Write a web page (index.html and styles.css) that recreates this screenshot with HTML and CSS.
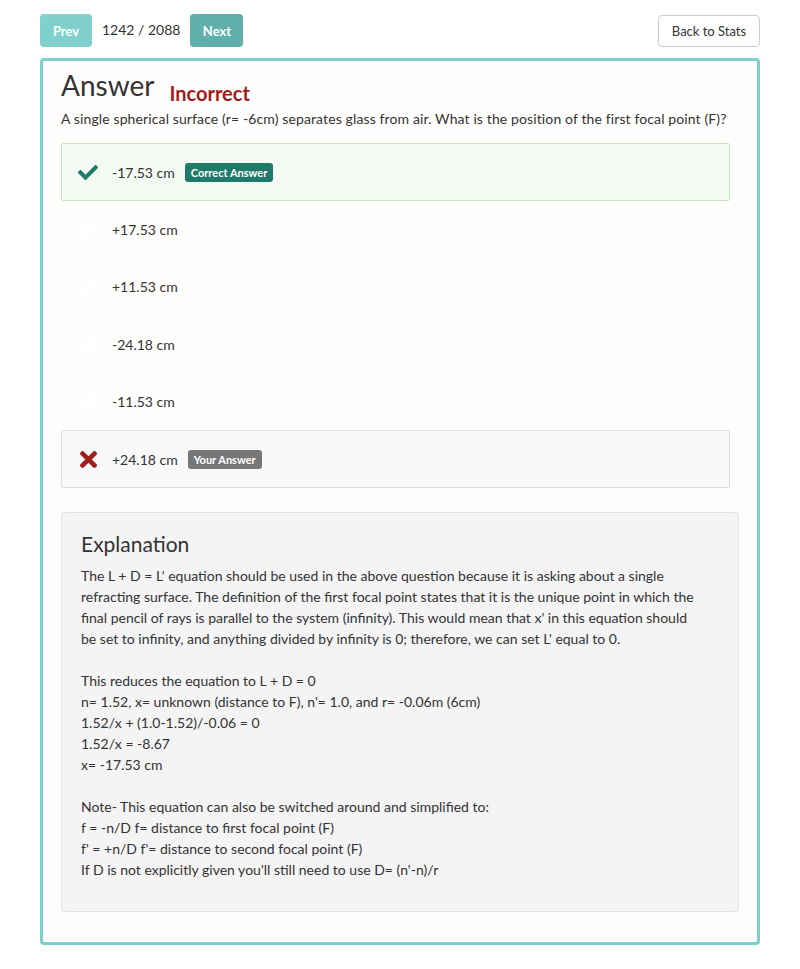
FILE: index.html
```html
<!DOCTYPE html>
<html>
<head>
<meta charset="utf-8">
<link rel="stylesheet" href="styles.css">
</head>
<body>
<div class="page">
  <div class="topbar">
    <div class="nav">
      <button class="btn btn-prev">Prev</button>
      <span class="counter">1242 / 2088</span>
      <button class="btn btn-next">Next</button>
    </div>
    <button class="btn-back">Back to Stats</button>
  </div>

  <div class="card">
    <div class="title">
      <h2>Answer</h2>
      <span class="status">Incorrect</span>
    </div>
    <p class="question">A single spherical surface (r= -6cm) separates glass from air. What is the position of the first focal point (F)?</p>

    <ul class="options">
      <li class="option correct">
        <span class="icon"><svg viewBox="0 64 512 384" width="20" height="15"><path fill="#1f7a6a" d="M173.898 439.404l-166.4-166.4c-9.997-9.997-9.997-26.206 0-36.204l36.203-36.204c9.997-9.998 26.207-9.998 36.204 0L192 312.69 432.095 72.596c9.997-9.997 26.207-9.997 36.204 0l36.203 36.204c9.997 9.997 9.997 26.206 0 36.204l-294.4 294.401c-9.998 9.997-26.207 9.997-36.204-.001z"/></svg></span>
        <span class="label">-17.53 cm</span>
        <span class="badge badge-correct">Correct Answer</span>
      </li>
      <li class="option">
        <span class="icon"><svg viewBox="0 64 512 384" width="20" height="15"><path fill="#ffffff" d="M173.898 439.404l-166.4-166.4c-9.997-9.997-9.997-26.206 0-36.204l36.203-36.204c9.997-9.998 26.207-9.998 36.204 0L192 312.69 432.095 72.596c9.997-9.997 26.207-9.997 36.204 0l36.203 36.204c9.997 9.997 9.997 26.206 0 36.204l-294.4 294.401c-9.998 9.997-26.207 9.997-36.204-.001z"/></svg></span>
        <span class="label">+17.53 cm</span>
      </li>
      <li class="option">
        <span class="icon"><svg viewBox="0 64 512 384" width="20" height="15"><path fill="#ffffff" d="M173.898 439.404l-166.4-166.4c-9.997-9.997-9.997-26.206 0-36.204l36.203-36.204c9.997-9.998 26.207-9.998 36.204 0L192 312.69 432.095 72.596c9.997-9.997 26.207-9.997 36.204 0l36.203 36.204c9.997 9.997 9.997 26.206 0 36.204l-294.4 294.401c-9.998 9.997-26.207 9.997-36.204-.001z"/></svg></span>
        <span class="label">+11.53 cm</span>
      </li>
      <li class="option">
        <span class="icon"><svg viewBox="0 64 512 384" width="20" height="15"><path fill="#ffffff" d="M173.898 439.404l-166.4-166.4c-9.997-9.997-9.997-26.206 0-36.204l36.203-36.204c9.997-9.998 26.207-9.998 36.204 0L192 312.69 432.095 72.596c9.997-9.997 26.207-9.997 36.204 0l36.203 36.204c9.997 9.997 9.997 26.206 0 36.204l-294.4 294.401c-9.998 9.997-26.207 9.997-36.204-.001z"/></svg></span>
        <span class="label">-24.18 cm</span>
      </li>
      <li class="option">
        <span class="icon"><svg viewBox="0 64 512 384" width="20" height="15"><path fill="#ffffff" d="M173.898 439.404l-166.4-166.4c-9.997-9.997-9.997-26.206 0-36.204l36.203-36.204c9.997-9.998 26.207-9.998 36.204 0L192 312.69 432.095 72.596c9.997-9.997 26.207-9.997 36.204 0l36.203 36.204c9.997 9.997 9.997 26.206 0 36.204l-294.4 294.401c-9.998 9.997-26.207 9.997-36.204-.001z"/></svg></span>
        <span class="label">-11.53 cm</span>
      </li>
      <li class="option wrong">
        <span class="icon"><svg viewBox="0 80 352 352" width="17" height="17"><path fill="#a11c1c" d="M242.72 256l100.07-100.07c12.28-12.28 12.28-32.19 0-44.48l-22.24-22.24c-12.28-12.28-32.19-12.28-44.48 0L176 189.28 75.93 89.21c-12.28-12.28-32.19-12.28-44.48 0L9.21 111.45c-12.28 12.28-12.28 32.19 0 44.48L109.28 256 9.21 356.07c-12.28 12.28-12.28 32.19 0 44.48l22.24 22.24c12.28 12.28 32.2 12.28 44.48 0L176 322.72l100.07 100.070c12.28 12.28 32.2 12.28 44.48 0l22.24-22.24c12.28-12.28 12.28-32.19 0-44.48L242.72 256z"/></svg></span>
        <span class="label">+24.18 cm</span>
        <span class="badge badge-yours">Your Answer</span>
      </li>
    </ul>

    <div class="explanation">
      <h3>Explanation</h3>
      <p>The L + D = L' equation should be used in the above question because it is asking about a single refracting surface. The definition of the first focal point states that it is the unique point in which the final pencil of rays is parallel to the system (infinity). This would mean that x' in this equation should be set to infinity, and anything divided by infinity is 0; therefore, we can set L' equal to 0.</p>
      <p>This reduces the equation to L + D = 0<br>n= 1.52, x= unknown (distance to F), n'= 1.0, and r= -0.06m (6cm)<br>1.52/x + (1.0-1.52)/-0.06 = 0<br>1.52/x = -8.67<br>x= -17.53 cm</p>
      <p>Note- This equation can also be switched around and simplified to:<br>f = -n/D f= distance to first focal point (F)<br>f' = +n/D f'= distance to second focal point (F)<br>If D is not explicitly given you'll still need to use D= (n'-n)/r</p>
    </div>
  </div>
</div>
</body>
</html>
```

FILE: styles.css
```css
* { box-sizing: border-box; }

body {
  margin: 0;
  background: #ffffff;
  font-family: Lato, "Open Sans", sans-serif;
  color: #333333;
  font-size: 14px;
  line-height: 1.5;
}

.page {
  width: 720px;
  margin: 0 auto;
  padding-top: 14px;
}

.topbar {
  display: flex;
  justify-content: space-between;
  align-items: flex-start;
  margin-bottom: 11px;
}

.nav {
  display: flex;
  align-items: center;
  gap: 10px;
}

.btn {
  height: 33px;
  border: none;
  border-radius: 4px;
  color: #ffffff;
  font-family: Lato, sans-serif;
  font-weight: 700;
  font-size: 13px;
  padding: 0 11px;
}

.btn-prev { background: #80d0cc; width: 52px; }
.btn-next { background: #5fafaa; width: 53px; }

.counter {
  font-size: 14px;
  color: #333333;
  margin-top: -2px;
}

.btn-back {
  height: 32px;
  margin-top: 1px;
  width: 102px;
  background: #ffffff;
  border: 1px solid #cccccc;
  border-radius: 4px;
  font-family: Lato, sans-serif;
  font-size: 13px;
  color: #333333;
}

.card {
  border: 3px solid #7dcfcb;
  border-radius: 4px;
  background: #fffefc;
  padding: 8px 18px 30px 18px;
}

.title {
  display: flex;
  align-items: baseline;
}

.title h2 {
  margin: 0;
  font-size: 28px;
  font-weight: 400;
  line-height: 33px;
  color: #333333;
}

.status {
  margin-left: 15px;
  font-size: 20px;
  font-weight: 700;
  color: #a11c1c;
  position: relative;
  top: 5px;
}

.question {
  margin: 6px 0 14px 0;
  font-size: 14px;
  line-height: 20px;
  letter-spacing: 0.12px;
}

.options {
  list-style: none;
  margin: 0 9px 0 0;
  padding: 0;
}

.option {
  display: flex;
  align-items: center;
  height: 58.4px;
  margin-bottom: -1px;
  padding: 0 16px;
  border: 1px solid transparent;
  border-radius: 2px;
  font-size: 14px;
}

.option.correct {
  background: #f3faf3;
  border-color: #c8e4c8;
}

.option.wrong {
  background: #f9f9f9;
  border-color: #dddddd;
}

.icon {
  width: 20px;
  margin-right: 14px;
  display: flex;
  justify-content: center;
}

.icon svg { display: block; }

.label {
  color: #333333;
}

.badge {
  margin-left: 10px;
  height: 19px;
  line-height: 19px;
  padding: 0 6px;
  border-radius: 3px;
  color: #ffffff;
  font-size: 11px;
  font-weight: 700;
}

.badge-correct { background: #1f7a6a; }
.badge-yours { background: #777777; }

.explanation {
  margin-top: 25px;
  background: #f4f4f4;
  border: 1px solid #e3e3e3;
  border-radius: 4px;
  padding: 19px 40px 31px 19px;
}

.explanation h3 {
  margin: 0 0 10px 0;
  font-size: 21px;
  font-weight: 400;
  line-height: 23px;
  color: #333333;
}

.explanation p {
  margin: 0 0 21px 0;
  font-size: 14px;
  line-height: 21px;
}

.explanation p:last-child { margin-bottom: 0; }
```
